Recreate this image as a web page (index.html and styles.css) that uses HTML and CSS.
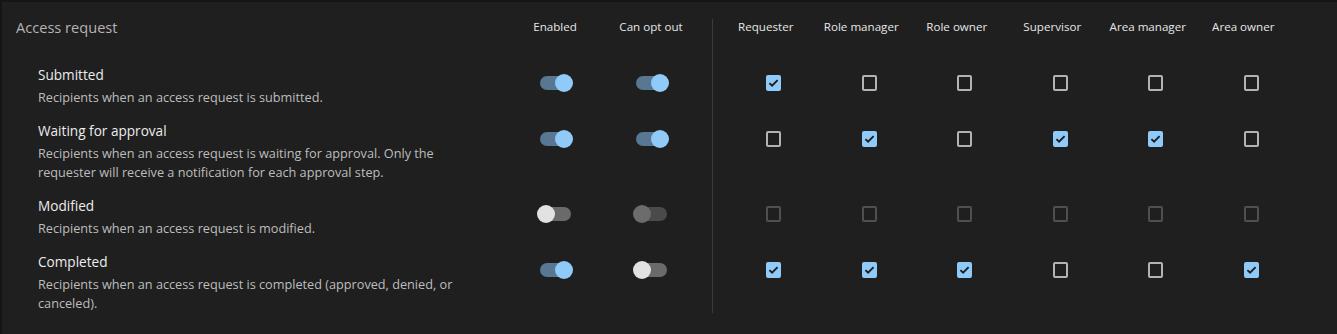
FILE: index.html
```html
<!DOCTYPE html>
<html lang="en">

<head>
    <meta charset="UTF-8">
    <meta name="viewport" content="width=device-width, initial-scale=1.0">
    <title>Notifications</title>

    <link rel="stylesheet" href="styles.css">

</head>

<body>
    <div class="card">
        <div class="matrix">
            <div class="divider"></div>

            <!-- header -->
            <div class="section_title">Access request</div>
            <div class="col_head">Enabled</div>
            <div class="col_head">Can opt out</div>
            <div class="col_head">Requester</div>
            <div class="col_head">Role manager</div>
            <div class="col_head">Role owner</div>
            <div class="col_head">Supervisor</div>
            <div class="col_head">Area manager</div>
            <div class="col_head">Area owner</div>

            <!-- submitted -->
            <div class="event">
                <div class="event_title">Submitted</div>
                <div class="event_desc">Recipients when an access request is submitted.</div>
            </div>
            <div class="cell"><span class="toggle on"><span class="knob"></span></span></div>
            <div class="cell"><span class="toggle on"><span class="knob"></span></span></div>
            <div class="cell box_cell"><span class="box checked"><svg viewBox="0 0 15 15"><path d="M3.4 7.6 6.1 10.2 11.6 4.6" /></svg></span></div>
            <div class="cell box_cell"><span class="box"></span></div>
            <div class="cell box_cell"><span class="box"></span></div>
            <div class="cell box_cell"><span class="box"></span></div>
            <div class="cell box_cell"><span class="box"></span></div>
            <div class="cell box_cell"><span class="box"></span></div>

            <!-- waiting -->
            <div class="event">
                <div class="event_title">Waiting for approval</div>
                <div class="event_desc">Recipients when an access request is waiting for approval. Only the requester will receive a notification for each approval step.</div>
            </div>
            <div class="cell"><span class="toggle on"><span class="knob"></span></span></div>
            <div class="cell"><span class="toggle on"><span class="knob"></span></span></div>
            <div class="cell box_cell"><span class="box"></span></div>
            <div class="cell box_cell"><span class="box checked"><svg viewBox="0 0 15 15"><path d="M3.4 7.6 6.1 10.2 11.6 4.6" /></svg></span></div>
            <div class="cell box_cell"><span class="box"></span></div>
            <div class="cell box_cell"><span class="box checked"><svg viewBox="0 0 15 15"><path d="M3.4 7.6 6.1 10.2 11.6 4.6" /></svg></span></div>
            <div class="cell box_cell"><span class="box checked"><svg viewBox="0 0 15 15"><path d="M3.4 7.6 6.1 10.2 11.6 4.6" /></svg></span></div>
            <div class="cell box_cell"><span class="box"></span></div>

            <!-- modified -->
            <div class="event">
                <div class="event_title">Modified</div>
                <div class="event_desc">Recipients when an access request is modified.</div>
            </div>
            <div class="cell"><span class="toggle"><span class="knob"></span></span></div>
            <div class="cell"><span class="toggle disabled"><span class="knob"></span></span></div>
            <div class="cell box_cell"><span class="box disabled"></span></div>
            <div class="cell box_cell"><span class="box disabled"></span></div>
            <div class="cell box_cell"><span class="box disabled"></span></div>
            <div class="cell box_cell"><span class="box disabled"></span></div>
            <div class="cell box_cell"><span class="box disabled"></span></div>
            <div class="cell box_cell"><span class="box disabled"></span></div>

            <!-- completed -->
            <div class="event">
                <div class="event_title">Completed</div>
                <div class="event_desc">Recipients when an access request is completed (approved, denied, or canceled).</div>
            </div>
            <div class="cell"><span class="toggle on"><span class="knob"></span></span></div>
            <div class="cell"><span class="toggle"><span class="knob"></span></span></div>
            <div class="cell box_cell"><span class="box checked"><svg viewBox="0 0 15 15"><path d="M3.4 7.6 6.1 10.2 11.6 4.6" /></svg></span></div>
            <div class="cell box_cell"><span class="box checked"><svg viewBox="0 0 15 15"><path d="M3.4 7.6 6.1 10.2 11.6 4.6" /></svg></span></div>
            <div class="cell box_cell"><span class="box checked"><svg viewBox="0 0 15 15"><path d="M3.4 7.6 6.1 10.2 11.6 4.6" /></svg></span></div>
            <div class="cell box_cell"><span class="box"></span></div>
            <div class="cell box_cell"><span class="box"></span></div>
            <div class="cell box_cell"><span class="box checked"><svg viewBox="0 0 15 15"><path d="M3.4 7.6 6.1 10.2 11.6 4.6" /></svg></span></div>
        </div>
    </div>
</body>

</html>
```

FILE: styles.css
```css
html,
body,
div {
    margin: 0;
    border: 0;
}

*,
*::before,
*::after {
    box-sizing: border-box;
}

body {
    background-color: #151515;
    font-family: "Open Sans", "Noto Sans", sans-serif;
    height: 334px;
    overflow: hidden;
}

.card {
    margin: 2px 0 0 2px;
    height: 332px;
    padding: 17px 0 0 14px;
    background-color: #1f1f1f;
}

/* matrix */

.matrix {
    display: grid;
    grid-template-columns: 491px 96px 96px 19px repeat(6, 95.5px);
    grid-template-rows: 32px auto auto auto auto;
    row-gap: 13px;
}

.divider {
    grid-column: 4;
    grid-row: 1 / -1;
    width: 1px;
    margin-left: 13px;
    background-color: #3b3b3b;
}

.section_title {
    font-size: 14.6px;
    line-height: 16px;
    color: #b4b4b4;
}

.col_head {
    font-size: 11.6px;
    line-height: 16px;
    color: #e6e6e6;
    text-align: center;
    white-space: nowrap;
}

.event {
    padding-left: 22px;
}

.event_title {
    padding-top: 1px;
    font-size: 13.6px;
    line-height: 20px;
    color: #ececec;
}

.event_desc {
    margin-top: 3px;
    max-width: 430px;
    font-size: 12.7px;
    line-height: 19px;
    color: #bdbdbd;
}

.cell {
    height: 38px;
    display: flex;
    align-items: center;
    justify-content: center;
}

.box_cell {
    padding-left: 16px;
}

/* switch */

.toggle {
    position: relative;
    width: 31px;
    height: 14px;
    border-radius: 7px;
    background-color: #6a6a6a;
}

.toggle .knob {
    position: absolute;
    top: -2px;
    left: -3px;
    width: 18px;
    height: 18px;
    border-radius: 50%;
    background-color: #e2e2e2;
}

.toggle.on {
    background-color: #587792;
}

.toggle.on .knob {
    left: 15px;
    background-color: #90caf9;
}

.toggle.disabled {
    background-color: #4a4a4a;
}

.toggle.disabled .knob {
    background-color: #6c6c6c;
}

/* checkbox */

.box {
    width: 15px;
    height: 16px;
    border: 2px solid #b3b3b3;
    border-radius: 2px;
    display: flex;
}

.box.checked {
    border: 0;
    background-color: #90caf9;
}

.box.disabled {
    border-color: #4f4f4f;
}

.box svg {
    width: 15px;
    height: 16px;
    fill: none;
    stroke: #1d1d1d;
    stroke-width: 1.9;
}
```
